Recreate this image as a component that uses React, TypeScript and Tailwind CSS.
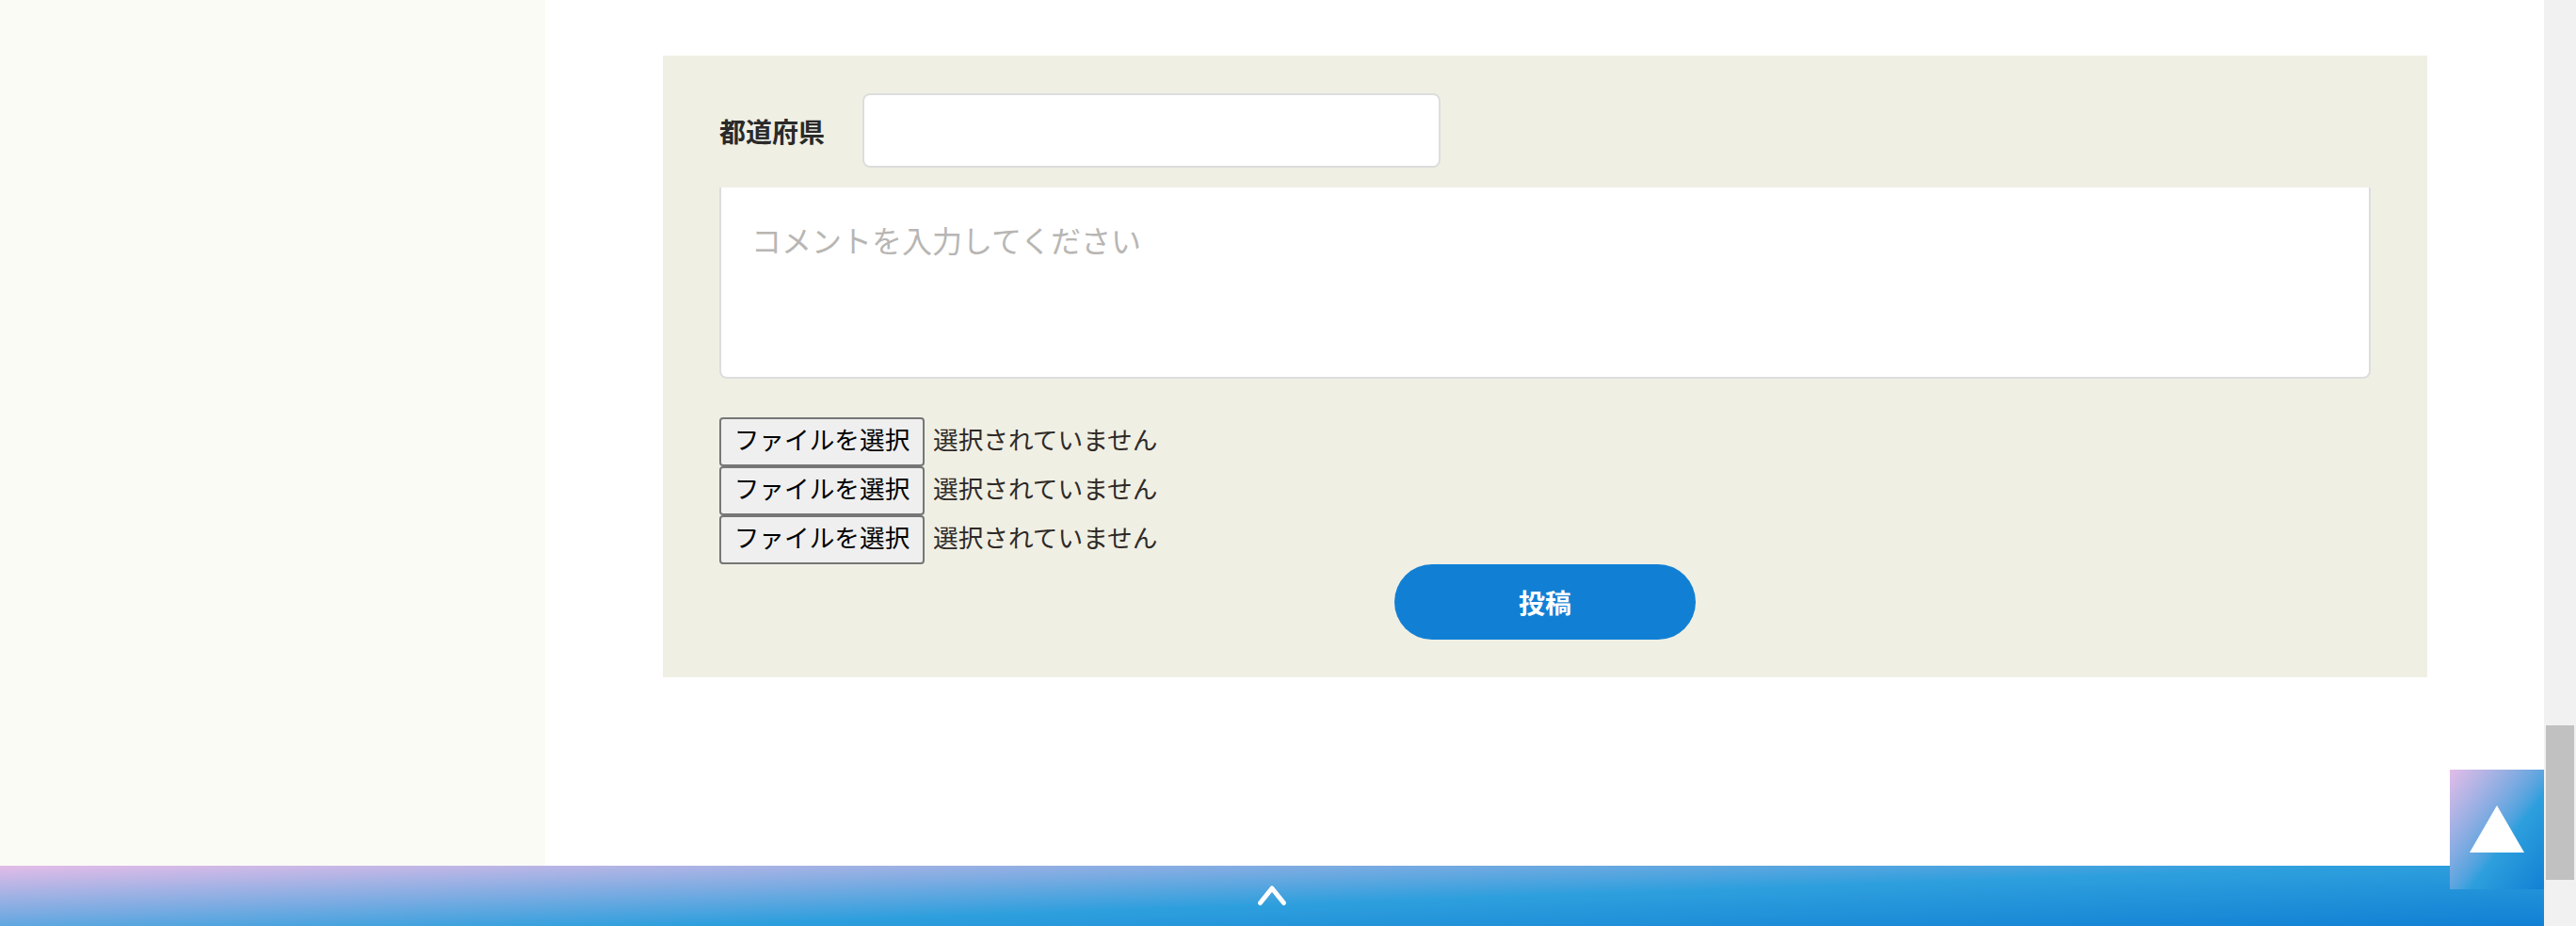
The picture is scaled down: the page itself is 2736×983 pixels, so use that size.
const font = "[font-family:'Noto_Sans_CJK_JP','Noto_Sans',sans-serif]";

function FileRow() {
  return (
    <div className="flex items-center h-[52px]">
      <button
        type="button"
        className="h-[52px] w-[218px] shrink-0 border-2 border-[#767676] rounded-[4px] bg-[#efefef] pb-[6px] text-[26.67px] font-normal leading-[34px] text-black text-center [font-family:'Noto_Sans_CJK_JP',sans-serif]"
      >
        ファイルを選択
      </button>
      <span className="ml-[9px] pb-[6px] text-[26.67px] font-normal leading-[34px] text-[#2e2a28]">選択されていません</span>
    </div>
  );
}

export default function App() {
  return (
    <div className={`flex h-[983px] w-[2736px] overflow-hidden bg-white ${font}`}>
      <div className="relative flex flex-col w-[2702px]">
        <div className="flex flex-1 min-h-0">
          <aside className="w-[579px] shrink-0 bg-[#fbfbf6]" />
          <main className="flex-1 bg-white pt-[59px] pl-[125px]">
            <form className="w-[1874px] h-[660px] bg-[#f0efe4] px-[60px] pt-[40px] flex flex-col">
              <div className="flex items-center">
                <label className="w-[152px] shrink-0 text-[28px] font-bold leading-[40px] text-[#2a2a2a]">都道府県</label>
                <input
                  type="text"
                  className="w-[614px] h-[79px] bg-white border-2 border-[#dddddd] rounded-[8px] outline-none"
                />
              </div>
              <textarea
                placeholder="コメントを入力してください"
                className="mt-[21px] w-full h-[203px] resize-none bg-white border-2 border-t-0 border-[#dddddd] rounded-b-[8px] px-[32px] pt-[32px] text-[32px] font-normal leading-[46px] outline-none placeholder:text-[#b8b6b3]"
              />
              <div className="mt-[41px] flex flex-col">
                <FileRow />
                <FileRow />
                <FileRow />
              </div>
              <div className="flex justify-center">
                <button
                  type="button"
                  className="w-[320px] h-[80px] rounded-full bg-[#1180d4] text-white text-[28px] font-bold"
                >
                  投稿
                </button>
              </div>
            </form>
          </main>
        </div>
        <footer className="h-[64px] shrink-0 flex justify-center bg-[linear-gradient(178deg,#e3bce8_0%,#2e9fdd_56%,#1180d4_100%)]">
          <svg width="36" height="26" viewBox="0 0 36 26" className="mt-[19px]" fill="none">
            <path d="M5.5 20.5 L18 5 L30.5 20.5" stroke="#ffffff" strokeWidth="5" strokeLinecap="round" strokeLinejoin="round" />
          </svg>
        </footer>
        <button
          type="button"
          aria-label="ページトップへ"
          className="absolute right-0 bottom-[39px] w-[100px] h-[127px] flex items-center justify-center bg-linear-to-br from-[#e3bce8] via-[#2e9fdd] via-60% to-[#1180d4]"
        >
          <svg width="58" height="50" viewBox="0 0 58 50" className="-mt-[1px]">
            <path d="M29 0 L58 50 L0 50 Z" fill="#ffffff" />
          </svg>
        </button>
      </div>
      <div className="w-[34px] shrink-0 bg-[#f1f1f1] pt-[770px] px-[2px]">
        <div className="h-[164px] w-[30px] bg-[#c1c1c1]" />
      </div>
    </div>
  );
}
